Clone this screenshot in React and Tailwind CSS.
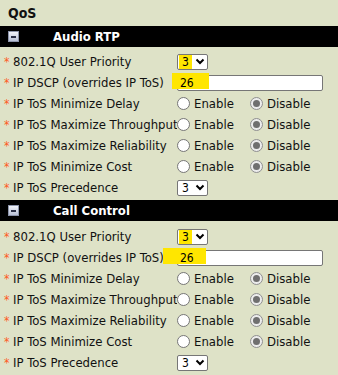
import React from 'react';

const font = { fontFamily: '"DejaVu Sans Condensed", Tahoma, "DejaVu Sans", sans-serif' };

const Minus = () => (
  <span className="flex h-[11px] w-[11px] items-center justify-center border border-[#8d95ab] bg-gradient-to-b from-[#f2f4fa] to-[#b9c1d6]">
    <span className="h-[2px] w-[5px] bg-[#2a2f45]" />
  </span>
);

const Chevron = () => (
  <svg width="10" height="7" viewBox="0 0 10 7" className="ml-[3px]">
    <path d="M1.5 1.5 L5 5 L8.5 1.5" fill="none" stroke="#000" strokeWidth="2" />
  </svg>
);

const Select = ({ mark }) => (
  <span className="flex h-[16px] w-[31px] items-center rounded-[2px] border border-[#767676] bg-white pl-[1px] text-[12px] leading-none">
    <span className={`flex h-full items-center px-[3px] ${mark ? 'bg-[#ffe600]' : ''}`}>3</span>
    <Chevron />
  </span>
);

const Radio = ({ checked }) =>
  checked ? (
    <span className="flex h-[13px] w-[13px] items-center justify-center rounded-full border border-[#8f8f8f] bg-[#ececec]">
      <span className="h-[7px] w-[7px] rounded-full bg-[#6f6f6f]" />
    </span>
  ) : (
    <span className="h-[13px] w-[13px] rounded-full border border-[#767676] bg-white" />
  );

const Row = ({ label, children }) => (
  <div className="flex h-[21px] items-center">
    <span className="w-[13px] pl-[4px] text-[12px] leading-none text-[#ff5a1f]">*</span>
    <span className="w-[164px] whitespace-nowrap overflow-hidden text-[13px] text-[#111]">{label}</span>
    <div className="flex items-center">{children}</div>
  </div>
);

const Toggle = () => (
  <div className="flex items-center text-[13px] text-[#111]">
    <Radio />
    <span className="ml-[4px] w-[56px]">Enable</span>
    <Radio checked />
    <span className="ml-[4px]">Disable</span>
  </div>
);

const Section = ({ title, first }) => (
  <div>
    <div className="flex h-[21px] items-center bg-black pl-[8px]">
      <Minus />
      <span className="ml-[34px] text-[13px] font-bold text-white">{title}</span>
    </div>
    <div className={first ? 'pt-[4px]' : 'pt-[5px]'}>
      <Row label="802.1Q User Priority">
        <Select mark />
      </Row>
      <Row label="IP DSCP (overrides IP ToS)">
        <span className={`relative flex h-[16px] w-[146px] items-center rounded-[2px] border border-[#767676] bg-white text-[12px]`}>
          <span className={`absolute top-[-3px] h-[16px] bg-[#ffe600] ${first ? 'left-[-6px] w-[37px]' : 'left-[-15px] w-[43px]'}`} />
          <span className="relative pl-[2px]">26</span>
        </span>
      </Row>
      <Row label="IP ToS Minimize Delay"><Toggle /></Row>
      <Row label="IP ToS Maximize Throughput"><Toggle /></Row>
      <Row label="IP ToS Maximize Reliability"><Toggle /></Row>
      <Row label="IP ToS Minimize Cost"><Toggle /></Row>
      <Row label="IP ToS Precedence">
        <Select />
      </Row>
    </div>
  </div>
);

export default function App() {
  return (
    <div className="h-[375px] w-[338px] overflow-hidden bg-[#dee2c7]" style={font}>
      <div className="flex h-[26px] items-center pl-[8px] text-[14px] font-bold text-[#111]">QoS</div>
      <Section title="Audio RTP" first />
      <div className="h-[2px]" />
      <Section title="Call Control" />
    </div>
  );
}
